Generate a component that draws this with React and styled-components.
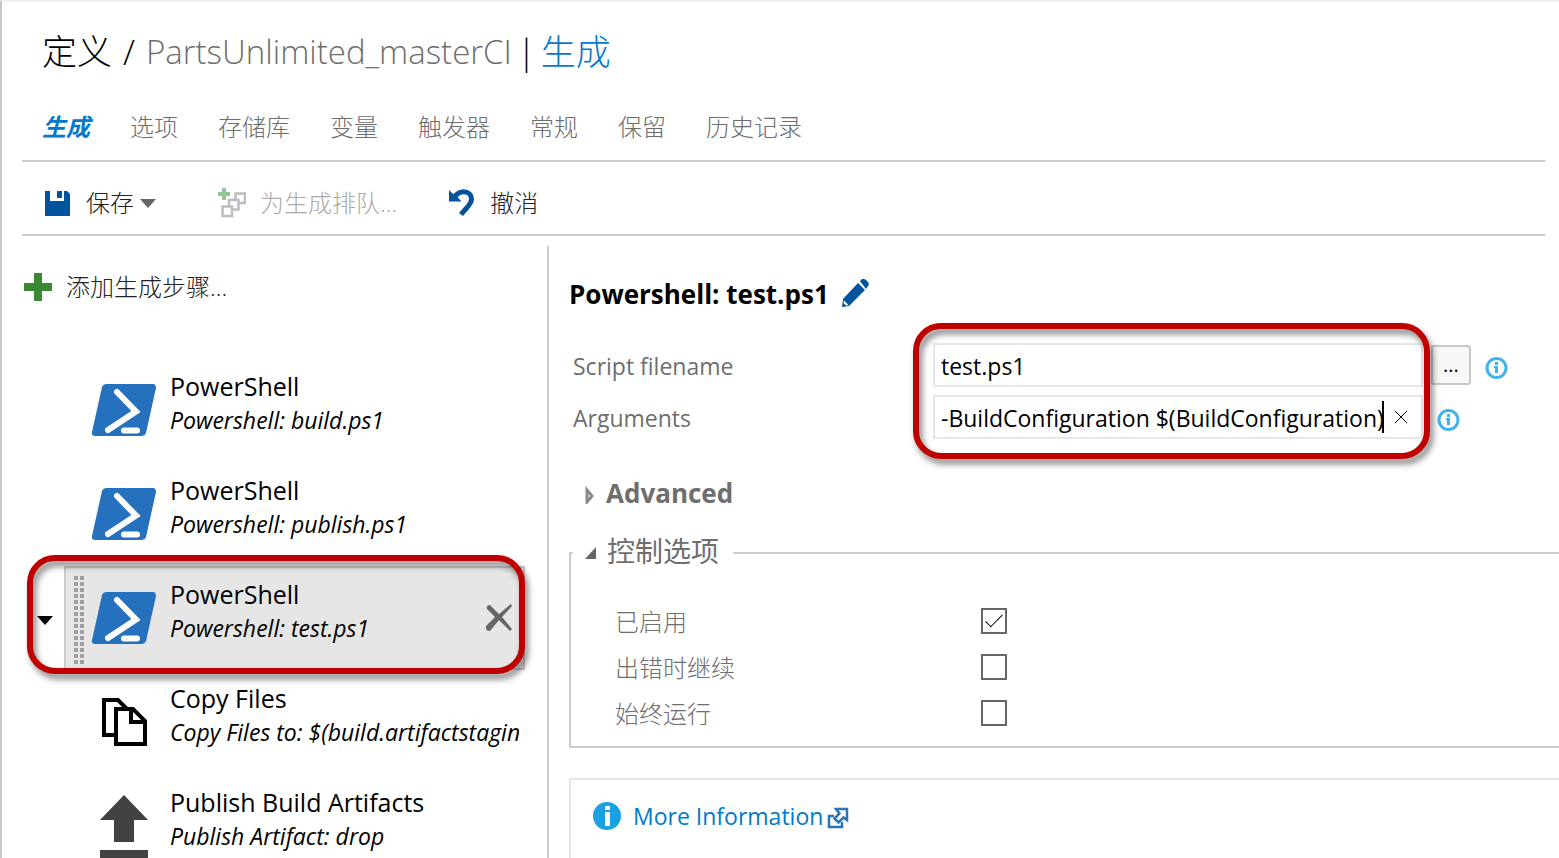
import React from "react";
import styled, { createGlobalStyle, css } from "styled-components";

const GlobalStyle = createGlobalStyle`
  * { box-sizing: border-box; }
  body {
    margin: 0;
    background: #fff;
    color: #000;
    font-family: "Open Sans", "Noto Sans CJK SC", sans-serif;
    font-size: 24px;
    line-height: 32px;
    overflow: hidden;
  }
  button, input { font: inherit; color: inherit; margin: 0; }
  a { text-decoration: none; }
  svg { display: block; flex: none; }
`;

const Page = styled.div`
  display: flex;
  flex-direction: column;
  height: 100vh;
  overflow: hidden;
  border-top: 2px solid #f0f0f0;
  border-left: 2px solid #c8c8c8;
  padding-left: 20px;
`;

const Header = styled.header`
  margin-right: 14px;
  padding: 26px 0 0 20px;
  border-bottom: 2px solid #ccc;
`;

const Title = styled.h1`
  display: flex;
  gap: 11px;
  margin: 0;
  font-size: 35px;
  line-height: 48px;
  font-weight: 300;
  white-space: nowrap;
`;

const CrumbGroup = styled.span`
  display: flex;
  gap: 5px;
`;

const Crumb = styled.span`
  color: ${(p) => (p.$tone === "muted" ? "#6e6e6e" : p.$tone === "accent" ? "#007acc" : "#000")};
  font-size: ${(p) => (p.$tone === "muted" ? 33 : 35)}px;
`;

const Tabs = styled.nav`
  display: flex;
  gap: 40px;
  padding: 33px 0 15px;
  font-weight: 300;
`;

const Tab = styled.a`
  color: #6e6e6e;
  line-height: 36px;
  ${(p) =>
    p.$active &&
    css`
      color: #007acc;
      font-weight: 700;
      font-style: italic;
    `}
`;

const Toolbar = styled.div`
  display: flex;
  gap: 51px;
  align-items: center;
  height: 74px;
  margin-right: 14px;
  padding: 10px 0 0 22px;
  border-bottom: 2px solid #ccc;
`;

const PlainButton = styled.button`
  display: flex;
  align-items: center;
  padding: 0;
  border: 0;
  background: none;
  white-space: nowrap;
`;

const ToolButton = styled(PlainButton)`
  gap: 14px;
  font-weight: 300;
  color: ${(p) => (p.disabled ? "#aaa" : "#222")};
`;

const SaveButton = styled(ToolButton)`
  gap: 16px;
  padding-right: 11px;
`;

const Caption = styled.span`
  display: flex;
  align-items: center;
  gap: 6px;
`;

const Body = styled.div`
  display: flex;
  flex: 1;
  min-height: 0;
  margin-top: 10px;
`;

const Steps = styled.aside`
  flex: none;
  width: 527px;
  border-right: 2px solid #ccc;
  padding-top: 24px;
`;

const AddStep = styled(ToolButton)`
  height: 34px;
  margin-left: 2px;
`;

const StepList = styled.ul`
  list-style: none;
  margin: 54px 22px 0 42px;
  padding: 0;
`;

const Step = styled.li`
  position: relative;
  display: flex;
  height: 104px;
  border: 2px solid ${(p) => (p.$selected ? "#ccc" : "transparent")};
  background: ${(p) => (p.$selected ? "#e6e6e6" : "transparent")};
`;

const Grip = styled.div`
  flex: none;
  width: 10px;
  margin: 6px 8px 4px;
  ${(p) =>
    p.$visible &&
    css`
      background-image: linear-gradient(#e6e6e6 2px, transparent 2px),
        linear-gradient(90deg, #a0a0a0 4px, #e6e6e6 4px);
      background-size: 6px 6px;
    `}
`;

const StepIcon = styled.div`
  display: flex;
  flex: none;
  align-items: center;
  justify-content: center;
  width: 64px;
`;

const StepText = styled.div`
  flex: 1;
  min-width: 0;
  margin: 9px 4px 0 14px;
  overflow: hidden;
  white-space: nowrap;
`;

const StepName = styled.div`
  font-size: 25px;
  line-height: 34px;
`;

const StepDetail = styled.div`
  font-size: 23px;
  line-height: 34px;
  font-style: italic;
`;

const RemoveButton = styled(PlainButton)`
  flex: none;
  margin-right: 10px;
`;

const MenuArrow = styled(PlainButton)`
  position: absolute;
  left: -29px;
  top: 48px;
`;

const Highlight = styled.div`
  position: absolute;
  inset: ${(p) => p.$inset};
  border: 6px solid #c00000;
  border-radius: 28px;
  filter: drop-shadow(3px 5px 3px rgba(0, 0, 0, 0.5));
  pointer-events: none;
`;

const Details = styled.main`
  flex: 1;
  min-width: 0;
  padding: 30px 0 0 20px;
`;

const Heading = styled.h2`
  display: flex;
  align-items: center;
  gap: 12px;
  margin: 0;
  font-size: 26px;
  line-height: 36px;
  font-weight: 700;
`;

const Fields = styled.div`
  display: grid;
  gap: 8px;
  margin: 31px 0 0 4px;
`;

const Field = styled.div`
  display: flex;
  align-items: center;
  height: 44px;
`;

const FieldLabel = styled.label`
  flex: none;
  width: 360px;
  padding-top: 2px;
  font-size: 23px;
  color: #6e6e6e;
`;

const Box = styled.div`
  display: flex;
  align-items: center;
  flex: 0 1 490px;
  min-width: 0;
  height: 44px;
  padding: 0 14px 0 6px;
  border: 2px solid #e6e6e6;
`;

const TextInput = styled.input`
  flex: 1;
  min-width: 0;
  height: 36px;
  padding: 2px 0 0;
  border: 0;
  outline: 0;
  background: none;
  font-size: 23px;
`;

const Caret = styled.span`
  flex: none;
  width: 2px;
  height: 32px;
  margin-right: 11px;
  background: #000;
`;

const BrowseButton = styled.button`
  flex: none;
  width: 40px;
  height: 40px;
  margin: 0 14px 0 8px;
  padding: 0;
  border: 2px solid #c8c8c8;
  border-radius: 3px;
  background: #f8f8f8;
  font-size: 20px;
`;

const InfoButton = styled(PlainButton)`
  flex: none;
  margin-left: ${(p) => p.$gap || 0}px;
  padding-top: 6px;
`;

const FieldGroup = styled.div`
  position: relative;
`;

const SectionToggle = styled(PlainButton)`
  gap: ${(p) => p.$gap}px;
  color: #6e6e6e;
  font-size: 26px;
  line-height: 36px;
  font-weight: 700;
`;

const Advanced = styled.div`
  margin: 36px 0 0 16px;
`;

const Options = styled.fieldset`
  margin: 20px 0 0;
  padding: 23px 0 10px 44px;
  border: 2px solid #ccc;
  border-right: 0;
`;

const Legend = styled.legend`
  margin-left: -42px;
  padding: 0 14px 4px 12px;
`;

const LegendToggle = styled(SectionToggle)`
  font-size: 28px;
  line-height: 40px;
  font-weight: 400;
`;

const Option = styled.div`
  display: flex;
  align-items: center;
  height: 46px;
  font-weight: 300;
  color: #6e6e6e;
`;

const OptionLabel = styled.label`
  width: 366px;
  padding-top: 2px;
`;

const CheckBox = styled.input`
  appearance: none;
  position: relative;
  width: 26px;
  height: 26px;
  border: 2px solid #666;
  background: #fff;
  &:checked::after {
    content: "";
    position: absolute;
    left: 7px;
    top: 0;
    width: 7px;
    height: 16px;
    border: solid #000;
    border-width: 0 1px 1px 0;
    transform: rotate(45deg);
  }
`;

const MoreInfo = styled.section`
  display: flex;
  align-items: flex-start;
  height: 120px;
  margin-top: 30px;
  padding: 20px 0 0 22px;
  border: 2px solid #e6e6e6;
  border-right: 0;
`;

const InfoMark = styled.span`
  padding-top: 2px;
`;

const MoreLink = styled.a`
  display: flex;
  align-items: center;
  gap: 4px;
  margin-left: 12px;
  font-size: 23px;
  color: #007acc;
`;

const ExternalMark = styled.span`
  padding-top: 4px;
`;

const SaveIcon = () => (
  <svg width="26" height="26" viewBox="0 0 26 26">
    <path fill="#00539c" d="M1 1h5v10h14V1h3l3 3v22H1zM13 1h5v7h-5z" />
  </svg>
);

const DownIcon = ({ color }) => (
  <svg width="16" height="9" viewBox="0 0 16 9">
    <path fill={color} d="M0 0h16L8 9z" />
  </svg>
);

const QueueIcon = () => (
  <svg width="28" height="30" viewBox="0 0 28 30" fill="#fff">
    <g stroke="#bdbdbd" strokeWidth="2.500">
      <path d="M17.500 5.500h9.500v9.500h-9.500z" />
      <path d="M11 12h9.500v9.500h-9.500z" />
      <path d="M4.500 18.500h9.500v9.500h-9.500z" />
    </g>
    <path stroke="#99c499" strokeWidth="4" d="M6 0v12M0 6h12" />
  </svg>
);

const UndoIcon = () => (
  <svg width="28" height="30" viewBox="0 0 28 30" fill="none">
    <path stroke="#00539c" strokeWidth="5" d="M6 9.500C9 5.500 12 3.800 15.500 3.800c5 0 8 3.200 8 7.200 0 5.500-5 8.500-10.500 15.500" />
    <path fill="#00539c" d="M1 2l3.500 3.500 4 2.500 5 5.500H1z" />
  </svg>
);

const PlusIcon = () => (
  <svg width="28" height="28" viewBox="0 0 28 28">
    <path fill="#388a34" d="M10 0h8v10h10v8H18v10h-8V18H0v-8h10z" />
  </svg>
);

const PowerShellIcon = () => (
  <svg width="64" height="54" viewBox="0 0 64 54">
    <path fill="#2671be" d="M15 1h46q3 0 3 4L54 50q-1 3-5 3H3q-4 0-3-4L10 4q1-3 5-3z" />
    <path fill="none" stroke="#fff" strokeWidth="6" strokeLinecap="round" d="M25 9l19 19.500L16 47M32 47.500h13" />
  </svg>
);

const CopyIcon = () => (
  <svg width="48" height="50" viewBox="0 0 48 50" fill="none" stroke="#000" strokeWidth="4">
    <path d="M15 38H4V3h14l9 9" />
    <path d="M16 12h17l12 12v23H16z" />
    <path d="M31 12v13h14" />
  </svg>
);

const PublishIcon = () => (
  <svg width="48" height="63" viewBox="0 0 48 63" fill="#424242">
    <path d="M24 0l24 25H34v22H14V25H0zM0 55h48v8H0z" />
  </svg>
);

const RemoveIcon = () => (
  <svg width="28" height="28" viewBox="0 0 28 28">
    <path fill="#666" d="M5 1l9 9L26 0l1 2-10 11 10 12-2 2-11-11L5 27q-5 0-4-5l9-9-8-8q-1-4 3-4z" />
  </svg>
);

const PencilIcon = () => (
  <svg width="28" height="30" viewBox="0 0 28 30">
    <path fill="#00539c" d="M17 4l7 7L8 27l-7 1 1-8zM19 2l2-2q2-1 5 2t1 5l-2 3z" />
    <path fill="#fff" d="M3 21.500l4.500 4.500-2.500.5-2.500-2.500z" />
  </svg>
);

const ClearIcon = () => (
  <svg width="12" height="12" viewBox="0 0 12 12" stroke="#000" fill="none">
    <path d="M0 0l12 12M12 0L0 12" />
  </svg>
);

const InfoIcon = () => (
  <svg width="24" height="24" viewBox="0 0 24 24">
    <circle cx="11.500" cy="12" r="9.500" fill="none" stroke="#45b2e6" strokeWidth="3" />
    <path fill="#45b2e6" d="M10 6h3v3h-3zM9 10h4v7h-3v-5H9z" />
  </svg>
);

const SolidInfoIcon = () => (
  <svg width="28" height="28" viewBox="0 0 28 28">
    <circle cx="14" cy="14" r="14" fill="#1ba1e2" />
    <path fill="#fff" d="M12 4h5v4h-5zM12 10h5v14h-5z" />
  </svg>
);

const ExternalIcon = () => (
  <svg width="22" height="22" viewBox="0 0 22 22" fill="none" stroke="#2b74b8" strokeWidth="2.500">
    <path d="M7 9H2v11h13v-5" />
    <path d="M9 2h11v11l-3.500-2.500-5 5-4-4 5-5z" />
  </svg>
);

const CollapsedIcon = () => (
  <svg width="10" height="22" viewBox="0 0 10 22">
    <path fill="none" stroke="#8a8a8a" strokeWidth="3" d="M2 8l5 6-5 6z" />
  </svg>
);

const ExpandedIcon = () => (
  <svg width="12" height="16" viewBox="0 0 12 16">
    <path fill="#666" d="M11 4v12H0z" />
  </svg>
);

const tabs = ["生成", "选项", "存储库", "变量", "触发器", "常规", "保留", "历史记录"];

const steps = [
  { name: "PowerShell", detail: "Powershell: build.ps1", Icon: PowerShellIcon },
  { name: "PowerShell", detail: "Powershell: publish.ps1", Icon: PowerShellIcon },
  { name: "PowerShell", detail: "Powershell: test.ps1", Icon: PowerShellIcon, selected: true },
  { name: "Copy Files", detail: "Copy Files to: $(build.artifactstagingdirectory)", Icon: CopyIcon },
  { name: "Publish Build Artifacts", detail: "Publish Artifact: drop", Icon: PublishIcon },
];

const options = [
  { id: "enabled", label: "已启用", checked: true },
  { id: "continue", label: "出错时继续" },
  { id: "always", label: "始终运行" },
];

function StepRow({ step }) {
  const { name, detail, Icon, selected } = step;
  return (
    <Step $selected={selected}>
      <Grip $visible={selected} />
      <StepIcon>
        <Icon />
      </StepIcon>
      <StepText>
        <StepName>{name}</StepName>
        <StepDetail>{detail}</StepDetail>
      </StepText>
      {selected && (
        <>
          <RemoveButton aria-label="Remove">
            <RemoveIcon />
          </RemoveButton>
          <MenuArrow aria-label="Menu">
            <DownIcon color="#000" />
          </MenuArrow>
          <Highlight $inset="-13px -2px -6px -39px" />
        </>
      )}
    </Step>
  );
}

export default function App() {
  return (
    <Page>
      <GlobalStyle />
      <Header>
        <Title>
          <Crumb>定义</Crumb>
          <Crumb>/</Crumb>
          <CrumbGroup>
            <Crumb $tone="muted">PartsUnlimited_masterCI</Crumb>
            <Crumb>|</Crumb>
            <Crumb $tone="accent">生成</Crumb>
          </CrumbGroup>
        </Title>
        <Tabs>
          {tabs.map((tab, i) => (
            <Tab key={tab} href="#" $active={i === 0}>
              {tab}
            </Tab>
          ))}
        </Tabs>
      </Header>
      <Toolbar>
        <SaveButton>
          <SaveIcon />
          <Caption>
            保存 <DownIcon color="#666" />
          </Caption>
        </SaveButton>
        <ToolButton disabled>
          <QueueIcon />
          为生成排队...
        </ToolButton>
        <ToolButton>
          <UndoIcon />
          撤消
        </ToolButton>
      </Toolbar>
      <Body>
        <Steps>
          <AddStep>
            <PlusIcon />
            添加生成步骤...
          </AddStep>
          <StepList>
            {steps.map((step) => (
              <StepRow key={step.detail} step={step} />
            ))}
          </StepList>
        </Steps>
        <Details>
          <Heading>
            Powershell: test.ps1
            <PlainButton aria-label="Rename">
              <PencilIcon />
            </PlainButton>
          </Heading>
          <FieldGroup>
            <Fields>
              <Field>
                <FieldLabel htmlFor="script">Script filename</FieldLabel>
                <Box>
                  <TextInput id="script" defaultValue="test.ps1" />
                </Box>
                <BrowseButton>...</BrowseButton>
                <InfoButton aria-label="Script filename help">
                  <InfoIcon />
                </InfoButton>
              </Field>
              <Field>
                <FieldLabel htmlFor="arguments">Arguments</FieldLabel>
                <Box>
                  <TextInput id="arguments" defaultValue="-BuildConfiguration $(BuildConfiguration)" />
                  <Caret />
                  <PlainButton aria-label="Clear">
                    <ClearIcon />
                  </PlainButton>
                </Box>
                <InfoButton aria-label="Arguments help" $gap={14}>
                  <InfoIcon />
                </InfoButton>
              </Field>
            </Fields>
            <Highlight $inset="-20px 129px -20px 344px" />
          </FieldGroup>
          <Advanced>
            <SectionToggle $gap={11}>
              <CollapsedIcon />
              Advanced
            </SectionToggle>
          </Advanced>
          <Options>
            <Legend>
              <LegendToggle $gap={10}>
                <ExpandedIcon />
                控制选项
              </LegendToggle>
            </Legend>
            {options.map((o) => (
              <Option key={o.id}>
                <OptionLabel htmlFor={o.id}>{o.label}</OptionLabel>
                <CheckBox type="checkbox" id={o.id} defaultChecked={o.checked} />
              </Option>
            ))}
          </Options>
          <MoreInfo>
            <InfoMark>
              <SolidInfoIcon />
            </InfoMark>
            <MoreLink href="#">
              More Information
              <ExternalMark>
                <ExternalIcon />
              </ExternalMark>
            </MoreLink>
          </MoreInfo>
        </Details>
      </Body>
    </Page>
  );
}
